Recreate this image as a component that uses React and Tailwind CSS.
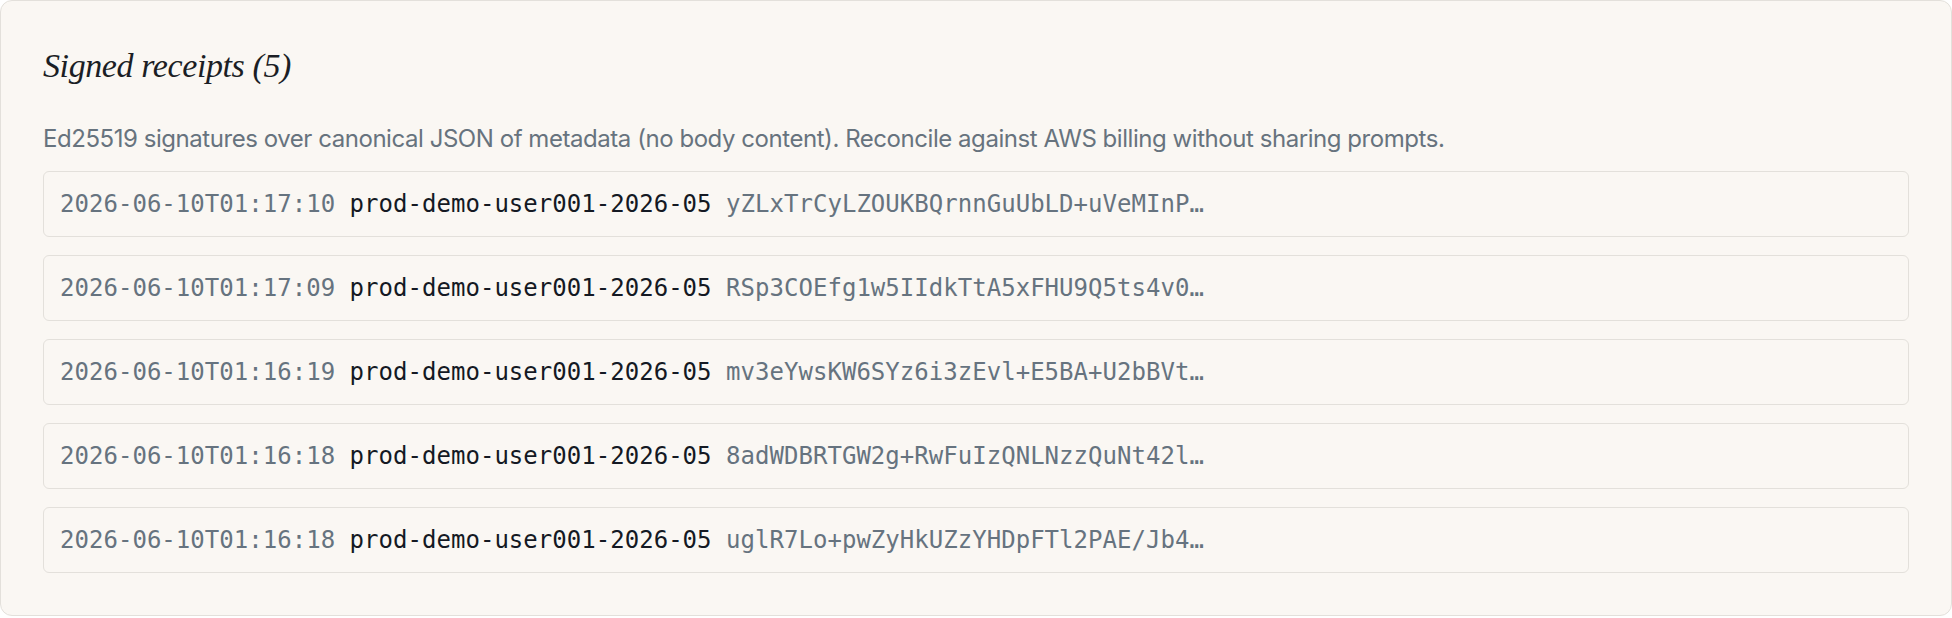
import React from "react";

const rows = [
  ["2026-06-10T01:17:10", "prod-demo-user001-2026-05", "yZLxTrCyLZOUKBQrnnGuUbLD+uVeMInP…"],
  ["2026-06-10T01:17:09", "prod-demo-user001-2026-05", "RSp3COEfg1w5IIdkTtA5xFHU9Q5ts4v0…"],
  ["2026-06-10T01:16:19", "prod-demo-user001-2026-05", "mv3eYwsKW6SYz6i3zEvl+E5BA+U2bBVt…"],
  ["2026-06-10T01:16:18", "prod-demo-user001-2026-05", "8adWDBRTGW2g+RwFuIzQNLNzzQuNt42l…"],
  ["2026-06-10T01:16:18", "prod-demo-user001-2026-05", "uglR7Lo+pwZyHkUZzYHDpFTl2PAE/Jb4…"],
];

export default function App() {
  return (
    <div className="w-[1952px] h-[618px] bg-white">
      <div className="w-[1952px] h-[616px] rounded-[12px] border border-[#e3e0db] bg-[#faf7f3] pt-[41px] px-[42px] pb-[41px]">
        <h2
          className="text-[34px] leading-[48px] italic text-[#1b1e25] tracking-[-0.4px]"
          style={{ fontFamily: '"Liberation Serif", serif' }}
        >
          Signed receipts (5)
        </h2>
        <p
          className="mt-[33px] text-[24px] leading-[32px] text-[#67737e] tracking-[-0.45px]"
          style={{ fontFamily: 'Inter, "Noto Sans", sans-serif' }}
        >
          Ed25519 signatures over canonical JSON of metadata (no body content). Reconcile against AWS billing without sharing prompts.
        </p>
        <div className="mt-[16px] flex flex-col gap-[18px]">
          {rows.map((r, i) => (
            <div
              key={i}
              className="rounded-[6px] border border-[#e3e0db] bg-[#faf7f3] px-4 py-4 text-[24px] leading-[32px] whitespace-nowrap tracking-[0.03px]"
              style={{ fontFamily: '"DejaVu Sans Mono", monospace' }}
            >
              <span className="text-[#66737f]">{r[0]}</span>{" "}
              <span className="text-[#141923]">{r[1]}</span>{" "}
              <span className="text-[#66737f]">{r[2]}</span>
            </div>
          ))}
        </div>
      </div>
    </div>
  );
}
